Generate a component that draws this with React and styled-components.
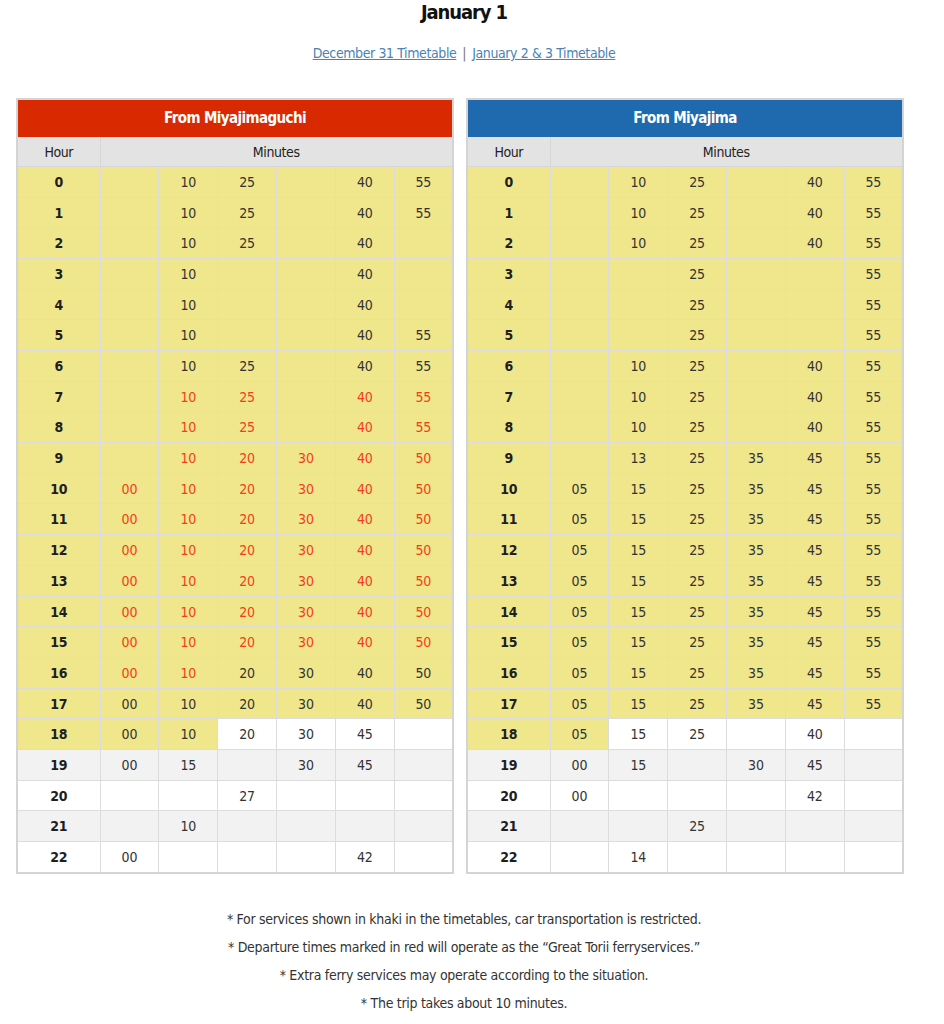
import styled, { createGlobalStyle, css } from 'styled-components'

const GlobalStyle = createGlobalStyle`
	body {
		margin: 0;
		background: #fff;
		font-family: "DejaVu Sans Condensed", "Liberation Sans", sans-serif;
		color: #333;
	}
`

const Page = styled.div`
	width: 928px;
	display: flex;
	flex-direction: column;
	align-items: center;
`

const Title = styled.h2`
	margin: 0;
	height: 24px;
	line-height: 24px;
	font-size: 20px;
	font-weight: 700;
	letter-spacing: -1.1px;
	color: #111;
`

const Links = styled.div`
	margin-top: 18px;
	font-size: 14px;
	line-height: 22px;
	letter-spacing: -0.4px;
	color: #888;
	a {
		color: #4a83b4;
		text-decoration: underline;
	}
`

const Sep = styled.span`
	margin: 0 6px;
	color: #777;
`

const Tables = styled.div`
	align-self: flex-start;
	margin: 34px 0 0 16px;
	display: flex;
	gap: 12px;
`

const Table = styled.table`
	width: 438px;
	border-collapse: collapse;
	border: 2px solid #d4d4d4;
	table-layout: fixed;
	font-size: 14px;
	letter-spacing: -0.2px;
`

const Caption = styled.th`
	height: 36px;
	padding: 0;
	background: ${p => p.$color};
	color: #fff;
	font-size: 15px;
	font-weight: 700;
	letter-spacing: -0.6px;
	border: 1px solid ${p => p.$color};
`

const HeadCell = styled.th`
	height: 29px;
	padding: 0;
	background: #e3e3e3;
	color: #222;
	font-weight: 400;
	font-size: 14px;
	letter-spacing: -0.4px;
	border: 1px solid #d6d6d6;
`

const Row = styled.tr`
	background: ${p => (p.$odd ? '#f2f2f2' : '#fff')};
	td {
		height: ${p => (p.$short ? 29 : 30)}px;
	}
`

const Cell = styled.td`
	padding: 0;
	text-align: center;
	border: 1px solid #dcdcdc;
	color: ${p => (p.$red ? '#f53d1b' : '#333')};
	${p => p.$khaki && css`background: #f0e68c;`}
`

const HourCell = styled(Cell)`
	font-weight: 700;
	color: #1e1e1e;
`

const Notes = styled.div`
	margin-top: 31px;
	text-align: center;
	font-size: 14px;
	line-height: 28px;
	letter-spacing: -0.3px;
	color: #333;
`

// rows are 30.68px apart in the original; spread that over whole pixels
const PITCH = 30.68
const isShort = h => Math.round((h + 1) * PITCH) - Math.round(h * PITCH) === 30

// second item = how many cells of the row, hour cell included, are khaki
const left = [
	[['', 10, 25, '', 40, 55], 7],
	[['', 10, 25, '', 40, 55], 7],
	[['', 10, 25, '', 40, ''], 7],
	[['', 10, '', '', 40, ''], 7],
	[['', 10, '', '', 40, ''], 7],
	[['', 10, '', '', 40, 55], 7],
	[['', 10, 25, '', 40, 55], 7],
	[['', '10r', '25r', '', '40r', '55r'], 7],
	[['', '10r', '25r', '', '40r', '55r'], 7],
	[['', '10r', '20r', '30r', '40r', '50r'], 7],
	[['00r', '10r', '20r', '30r', '40r', '50r'], 7],
	[['00r', '10r', '20r', '30r', '40r', '50r'], 7],
	[['00r', '10r', '20r', '30r', '40r', '50r'], 7],
	[['00r', '10r', '20r', '30r', '40r', '50r'], 7],
	[['00r', '10r', '20r', '30r', '40r', '50r'], 7],
	[['00r', '10r', '20r', '30r', '40r', '50r'], 7],
	[['00r', '10r', 20, 30, 40, 50], 7],
	[['00', 10, 20, 30, 40, 50], 7],
	[['00', 10, 20, 30, 45, ''], 3],
	[['00', 15, '', 30, 45, ''], 0],
	[['', '', 27, '', '', ''], 0],
	[['', 10, '', '', '', ''], 0],
	[['00', '', '', '', 42, ''], 0],
]

const full = ['05', 15, 25, 35, 45, 55]
const right = [
	[['', 10, 25, '', 40, 55], 7],
	[['', 10, 25, '', 40, 55], 7],
	[['', 10, 25, '', 40, 55], 7],
	[['', '', 25, '', '', 55], 7],
	[['', '', 25, '', '', 55], 7],
	[['', '', 25, '', '', 55], 7],
	[['', 10, 25, '', 40, 55], 7],
	[['', 10, 25, '', 40, 55], 7],
	[['', 10, 25, '', 40, 55], 7],
	[['', 13, 25, 35, 45, 55], 7],
	[full, 7],
	[full, 7],
	[full, 7],
	[full, 7],
	[full, 7],
	[full, 7],
	[full, 7],
	[full, 7],
	[['05', 15, 25, '', 40, ''], 2],
	[['00', 15, '', 30, 45, ''], 0],
	[['00', '', '', '', 42, ''], 0],
	[['', '', 25, '', '', ''], 0],
	[['', 14, '', '', '', ''], 0],
]

function Timetable({ title, color, rows }) {
	return (
		<Table>
			<colgroup>
				<col style={{ width: 83 }} />
				{[0, 1, 2, 3, 4, 5].map(i => <col key={i} />)}
			</colgroup>
			<thead>
				<tr>
					<Caption colSpan={7} $color={color}>{title}</Caption>
				</tr>
				<tr>
					<HeadCell>Hour</HeadCell>
					<HeadCell colSpan={6}>Minutes</HeadCell>
				</tr>
			</thead>
			<tbody>
				{rows.map(([mins, khaki], h) => (
					<Row key={h} $odd={h % 2 === 1} $short={isShort(h)}>
						<HourCell $khaki={khaki > 0}>{h}</HourCell>
						{mins.map((m, i) => {
							const s = String(m)
							const red = s.endsWith('r')
							return (
								<Cell key={i} $khaki={i + 1 < khaki} $red={red}>
									{red ? s.slice(0, -1) : s}
								</Cell>
							)
						})}
					</Row>
				))}
			</tbody>
		</Table>
	)
}

export default function App() {
	return (
		<Page>
			<GlobalStyle />
			<Title>January 1</Title>
			<Links>
				<a href="#dec31">December 31 Timetable</a>
				<Sep>|</Sep>
				<a href="#jan2">January 2 &amp; 3 Timetable</a>
			</Links>
			<Tables>
				<Timetable title="From Miyajimaguchi" color="#d92900" rows={left} />
				<Timetable title="From Miyajima" color="#1f6aae" rows={right} />
			</Tables>
			<Notes>
				<div>* For services shown in khaki in the timetables, car transportation is restricted.</div>
				<div>* Departure times marked in red will operate as the “Great Torii ferryservices.”</div>
				<div>* Extra ferry services may operate according to the situation.</div>
				<div>* The trip takes about 10 minutes.</div>
			</Notes>
		</Page>
	)
}
